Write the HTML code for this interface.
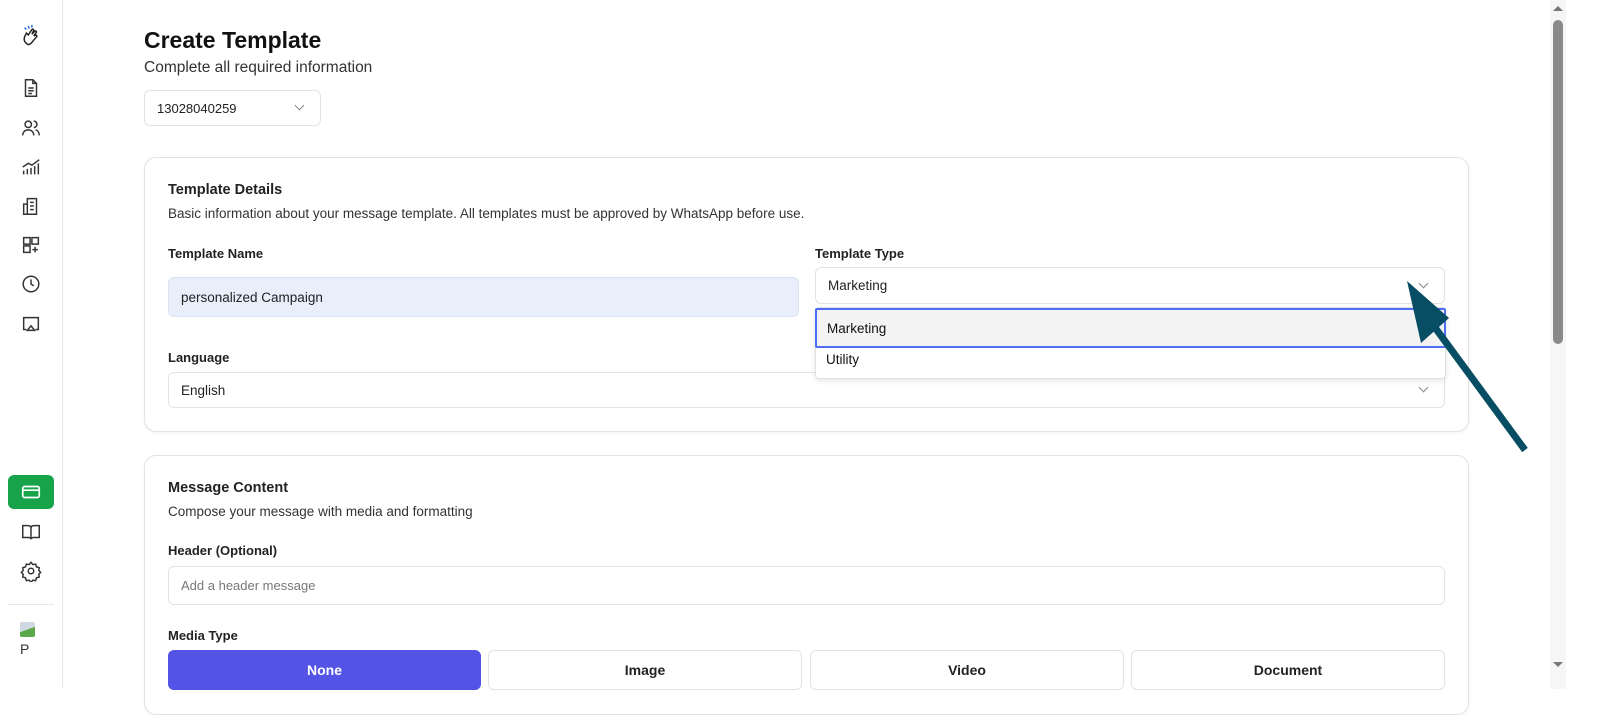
<!DOCTYPE html>
<html><head><style>
*{box-sizing:border-box;margin:0;padding:0}
body{width:1599px;height:689px;overflow:hidden;background:#fff;font-family:"Liberation Sans",sans-serif;color:#111;position:relative}
.a{position:absolute}
.side{left:0;top:0;width:63px;height:689px;border-right:1px solid #e8e8e8;background:#fff}
.ic{position:absolute;left:20px;width:22px;height:22px}
.card{position:absolute;border:1px solid #e3e3e3;border-radius:12px;background:#fff;box-shadow:0 1px 3px rgba(0,0,0,.05)}
.in{position:absolute;border:1px solid #e3e3e3;border-radius:6px;background:#fff;font-size:13.5px;padding-left:12px;display:flex;align-items:center;color:#222}
.lbl{position:absolute;font-size:13px;font-weight:bold;color:#222}
.t{position:absolute;font-size:13.5px;color:#333}
.chev{position:absolute;width:7px;height:7px;border-right:1.3px solid #888;border-bottom:1.3px solid #888;transform:rotate(45deg)}
.btn{position:absolute;top:650px;height:40px;border:1px solid #e3e3e3;border-radius:6px;font-size:14px;font-weight:bold;display:flex;justify-content:center;align-items:center;color:#222}
</style></head><body>
<div class="a side">
<svg class="ic" style="top:24px" viewBox="0 0 24 24" fill="none" stroke="#222" stroke-width="1.6"><path d="M8 22c-3-2-4-5-3-8l2-4 2 2 4-6c1-1 2 0 2 1l-2 4 3-3c1-1 2 0 2 1l-3 4 2-1c1 0 2 1 1 2l-5 6c-2 2-4 3-5 2z"/><path d="M9 2l1 3M13 1v3M5 4l2 2" stroke="#2a6fdb"/></svg>
<svg class="ic" style="top:77px" viewBox="0 0 24 24" fill="none" stroke="#333" stroke-width="1.6"><path d="M6 3h8l4 4v14H6z M14 3v4h4 M9 12h6M9 15h6M9 18h4"/></svg>
<svg class="ic" style="top:117px" viewBox="0 0 24 24" fill="none" stroke="#333" stroke-width="1.6"><circle cx="9" cy="8" r="3.5"/><path d="M3 20c0-4 3-6 6-6s6 2 6 6M15 4.5a3.5 3.5 0 010 7M17 14c2 .5 4 2.5 4 6"/></svg>
<svg class="ic" style="top:156px" viewBox="0 0 24 24" fill="none" stroke="#333" stroke-width="1.6"><path d="M4 20v-4M8 20v-6M12 20v-7M16 20v-9M20 20V8M3 12l6-4 4 2 8-6"/></svg>
<svg class="ic" style="top:195px" viewBox="0 0 24 24" fill="none" stroke="#333" stroke-width="1.6"><path d="M8 4h10v17H8zM8 10H4v11h4M11 8h4M11 12h4M11 16h4"/></svg>
<svg class="ic" style="top:234px" viewBox="0 0 24 24" fill="none" stroke="#333" stroke-width="1.6"><path d="M4 4h7v7H4zM13 4h7v7h-7zM4 13h7v7H4zM16.5 14v6M13.5 17h6"/></svg>
<svg class="ic" style="top:273px" viewBox="0 0 24 24" fill="none" stroke="#333" stroke-width="1.6"><circle cx="12" cy="12" r="8.5"/><path d="M12 7v5l3 2"/></svg>
<svg class="ic" style="top:313px" viewBox="0 0 24 24" fill="none" stroke="#333" stroke-width="1.6"><path d="M7 18H4V5h16v13h-3M12 14l-4 5h8z"/></svg>
<div class="a" style="left:8px;top:475px;width:46px;height:34px;background:#17a34a;border-radius:6px"></div>
<svg class="ic" style="top:481px" viewBox="0 0 24 24" fill="none" stroke="#fff" stroke-width="1.8"><rect x="3" y="6" width="18" height="12" rx="2"/><path d="M3 10h18"/></svg>
<svg class="ic" style="top:521px" viewBox="0 0 24 24" fill="none" stroke="#333" stroke-width="1.6"><path d="M3 5h6c2 0 3 1 3 3v12c0-1-1-2-3-2H3zM21 5h-6c-2 0-3 1-3 3v12c0-1 1-2 3-2h6z"/></svg>
<svg class="ic" style="top:560px" viewBox="0 0 24 24" fill="none" stroke="#333" stroke-width="1.6"><circle cx="12" cy="12" r="3"/><path d="M12 2.5l2 2.5 3-.5 1 3 3 1-.5 3 2 2-2 2 .5 3-3 1-1 3-3-.5-2 2.5-2-2.5-3 .5-1-3-3-1 .5-3-2-2 2-2-.5-3 3-1 1-3 3 .5z"/></svg>
<div class="a" style="left:8px;top:604px;width:46px;border-top:1px solid #e8e8e8"></div>
<div class="a" style="left:20px;top:622px;width:15px;height:15px;background:linear-gradient(160deg,#cfd8e3 50%,#5aa84a 50%);border-radius:2px"></div>
<div class="a" style="left:20px;top:641px;font-size:14px;color:#333">P</div>
</div>

<div class="a" style="left:144px;top:27px;font-size:23px;font-weight:bold">Create Template</div>
<div class="a" style="left:144px;top:59px;font-size:15.5px;color:#333">Complete all required information</div>
<div class="in" style="left:144px;top:90px;width:177px;height:36px;font-size:13px">13028040259</div>
<div class="chev" style="left:296px;top:102px"></div>

<div class="card" style="left:144px;top:157px;width:1325px;height:275px"></div>
<div class="a" style="left:168px;top:182px;font-size:14.5px;font-weight:bold;color:#222">Template Details</div>
<div class="t" style="left:168px;top:206px">Basic information about your message template. All templates must be approved by WhatsApp before use.</div>
<div class="lbl" style="left:168px;top:246px">Template Name</div>
<div class="in" style="left:168px;top:277px;width:631px;height:40px;background:#e8effb;border-color:#dbe3f0">personalized Campaign</div>
<div class="lbl" style="left:815px;top:246px">Template Type</div>
<div class="in" style="left:815px;top:267px;width:630px;height:37px">Marketing</div>
<div class="chev" style="left:1420px;top:280px"></div>
<div class="lbl" style="left:168px;top:350px">Language</div>
<div class="in" style="left:168px;top:372px;width:1277px;height:36px">English</div>
<div class="chev" style="left:1420px;top:384px"></div>
<div class="a" style="left:815px;top:307px;width:631px;height:72px;background:#fff;border:1px solid #e0e0e0;border-radius:4px;box-shadow:0 2px 6px rgba(0,0,0,.1)"></div>
<div class="a" style="left:815px;top:308px;width:631px;height:40px;background:#f3f3f3;border:2px solid #4f6ef7;border-radius:2px;font-size:13.5px;padding-left:10px;display:flex;align-items:center">Marketing</div>
<div class="a" style="left:826px;top:352px;font-size:13.5px">Utility</div>

<div class="card" style="left:144px;top:455px;width:1325px;height:260px"></div>
<div class="a" style="left:168px;top:480px;font-size:14.5px;font-weight:bold;color:#222">Message Content</div>
<div class="t" style="left:168px;top:504px">Compose your message with media and formatting</div>
<div class="lbl" style="left:168px;top:543px">Header (Optional)</div>
<div class="in" style="left:168px;top:566px;width:1277px;height:39px;color:#777;font-size:13px">Add a header message</div>
<div class="lbl" style="left:168px;top:628px">Media Type</div>
<div class="btn" style="left:168px;width:313px;background:#5353e6;border-color:#5353e6;color:#fff">None</div>
<div class="btn" style="left:488px;width:314px">Image</div>
<div class="btn" style="left:810px;width:314px">Video</div>
<div class="btn" style="left:1131px;width:314px">Document</div>

<div class="a" style="left:1550px;top:0;width:16px;height:689px;background:#f6f6f6"></div>
<div class="a" style="left:1553px;top:20px;width:10px;height:324px;background:#8a8a8a;border-radius:5px"></div>
<div class="a" style="left:1553px;top:6px;width:0;height:0;border:5px solid transparent;border-bottom-color:#777;border-top:0"></div>
<div class="a" style="left:1553px;top:662px;width:0;height:0;border:5px solid transparent;border-top-color:#777;border-bottom:0"></div>

<svg class="a" style="left:0;top:0" width="1599" height="689"><path d="M1525 450L1428 318" stroke="#074d63" stroke-width="7"/><path d="M1407 281L1449 318L1421 343z" fill="#074d63"/></svg>
</body></html>
